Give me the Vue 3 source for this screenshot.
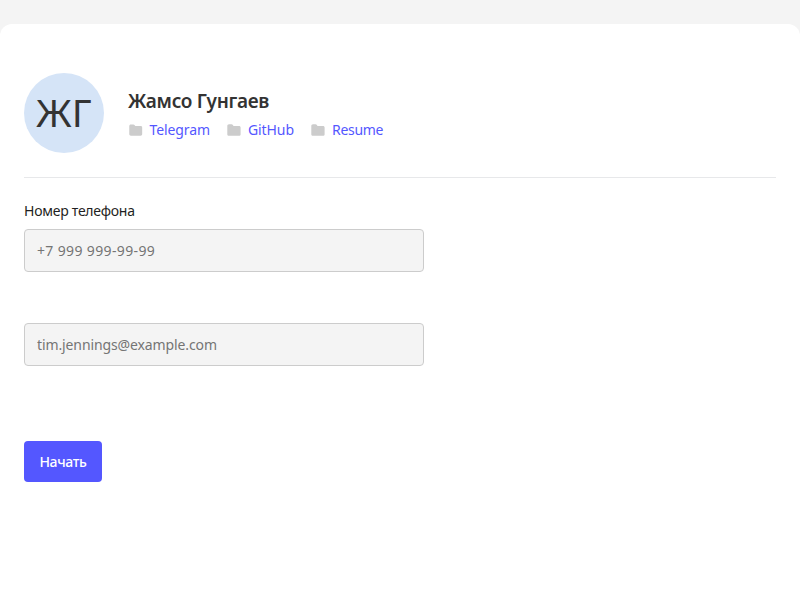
<script setup>
import { ref } from 'vue'

const links = ['Telegram', 'GitHub', 'Resume']
const phone = ref('')
const email = ref('')
</script>

<template>
  <main class="page">
    <section class="card">
      <header class="profile">
        <div class="avatar"><span>ЖГ</span></div>
        <div class="info">
          <h1 class="name">Жамсо Гунгаев</h1>
          <nav class="links">
            <a v-for="link in links" :key="link" class="link" :class="link.toLowerCase()">
              <svg class="folder" width="16" height="16" viewBox="0 0 16 16" aria-hidden="true">
                <path d="M1.3 4C1.3 3 2 2.3 3 2.3h2.5c.6 0 1 .3 1.4.8l.6.8H13c1 0 1.6.6 1.6 1.5v6.8c0 1-.6 1.6-1.6 1.6H3c-1 0-1.7-.6-1.7-1.6z" fill="#ccc" />
              </svg>
              <span class="caption">{{ link }}</span>
            </a>
          </nav>
        </div>
      </header>
      <form class="form" @submit.prevent>
        <label class="label" for="phone"><span>Номер телефона</span></label>
        <input id="phone" v-model="phone" class="input phone" type="tel" placeholder="+7 999 999-99-99" />
        <input v-model="email" class="input email" type="email" placeholder="tim.jennings@example.com" />
        <button class="start" type="submit">Начать</button>
      </form>
    </section>
  </main>
</template>

<style>
body {
  background: #f4f4f4;
}
</style>

<style scoped>
.page {
  box-sizing: border-box;
  height: 600px;
  padding-top: 24px;
  overflow: hidden;
  font-family: "Noto Sans", sans-serif;
  font-size: 14px;
  color: #333;
}
.card {
  box-sizing: border-box;
  height: 576px;
  padding: 49px 24px 0;
  background: #fff;
  border-radius: 12px 12px 0 0;
}
.profile {
  display: flex;
  gap: 24px;
  height: 80px;
  padding-bottom: 24px;
  border-bottom: 1px solid #e7e8ea;
}
.avatar {
  box-sizing: border-box;
  display: flex;
  align-items: center;
  justify-content: center;
  width: 80px;
  height: 80px;
  padding-bottom: 4px;
  border-radius: 50%;
  background: #d5e4f7;
  font-size: 39px;
  letter-spacing: 0.3px;
}
.info {
  padding-top: 14px;
}
.name {
  margin: 0;
  font-size: 19px;
  line-height: 28px;
  font-weight: 600;
  letter-spacing: -0.3px;
}
.links {
  display: flex;
  gap: 16px;
  margin-top: 5px;
}
.link {
  display: flex;
  align-items: center;
  gap: 6px;
  line-height: 20px;
  color: #5457ff;
}
.telegram {
  width: 82px;
  letter-spacing: -0.1px;
}
.github {
  width: 68px;
  letter-spacing: -0.1px;
}
.resume {
  letter-spacing: -0.3px;
}
.folder {
  display: block;
}
.label {
  display: block;
  margin-top: 23px;
  line-height: 20px;
  letter-spacing: -0.26px;
  color: #1f1f22;
}
.input {
  display: block;
  box-sizing: border-box;
  width: 400px;
  height: 43px;
  padding: 0 12px;
  border: 1px solid #ccc;
  border-radius: 4px;
  outline: none;
  background: #f4f4f4;
  font: inherit;
  color: #333;
}
.input::placeholder {
  color: #757575;
}
.phone {
  margin-top: 8px;
  letter-spacing: 0.36px;
}
.email {
  margin-top: 51px;
  letter-spacing: -0.11px;
}
.start {
  display: block;
  width: 78px;
  height: 41px;
  margin-top: 75px;
  padding: 0;
  border: 0;
  border-radius: 4px;
  background: #5457ff;
  color: #fff;
  font: inherit;
  font-weight: 500;
  letter-spacing: -0.35px;
}
</style>
